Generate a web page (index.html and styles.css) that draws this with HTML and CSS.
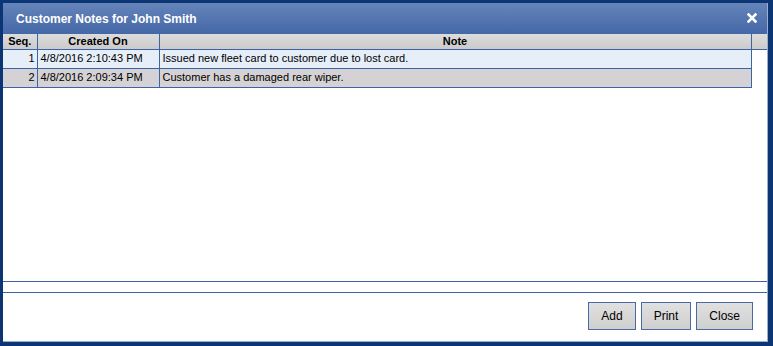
FILE: index.html
```html
<!DOCTYPE html>
<html>
<head>
<meta charset="utf-8">
<link rel="stylesheet" href="styles.css">
</head>
<body>
<div class="dialog">
  <div class="inner">
    <div class="titlebar">
      <span class="title">Customer Notes for John Smith</span>
      <svg class="close-x" width="10" height="10" viewBox="0 0 10 10"><path d="M1.5 1.5 L8.5 8.5 M8.5 1.5 L1.5 8.5" stroke="#fff" stroke-width="2.6" stroke-linecap="square"/></svg>
    </div>
    <div class="grid">
      <div class="ghead">
        <table class="tbl">
          <colgroup><col class="c1"><col class="c2"><col class="c3"></colgroup>
          <tr><th>Seq.</th><th>Created On</th><th>Note</th></tr>
        </table>
      </div>
      <table class="tbl body">
        <colgroup><col class="c1"><col class="c2"><col class="c3"></colgroup>
        <tr class="r1"><td class="num">1</td><td>4/8/2016 2:10:43 PM</td><td>Issued new fleet card to customer due to lost card.</td></tr>
        <tr class="r2"><td class="num">2</td><td>4/8/2016 2:09:34 PM</td><td>Customer has a damaged rear wiper.</td></tr>
      </table>
    </div>
    <div class="strip"></div>
    <div class="footer">
      <button class="btn">Add</button>
      <button class="btn">Print</button>
      <button class="btn">Close</button>
    </div>
  </div>
</div>
</body>
</html>
```
FILE: styles.css
```css
* { box-sizing: border-box; }
body { margin: 0; font-family: "Liberation Sans", Arial, sans-serif; }
.dialog {
  width: 773px; height: 346px;
  background: #0b3573;
  border-style: solid; border-color: #0b3573;
  border-width: 3px 5px 4px 3px;
}
.inner {
  height: 100%;
  background: #fff;
  border-right: 1px solid #9aaecd;
  border-bottom: 1px solid #9aaecd;
  display: flex; flex-direction: column;
}
.titlebar {
  height: 31px;
  background: linear-gradient(#6584ba, #4467a6);
  display: flex; align-items: center; justify-content: space-between;
  padding: 0 10px 0 13px;
}
.title { color: #fff; font-weight: bold; font-size: 12px; }
.close-x { display: block; margin-top: -1px; }
.grid { height: 248px; border-bottom: 1px solid #3d63a6; }
.ghead {
  background: linear-gradient(#dcdcdc, #cbcbcb);
  border-bottom: 1px solid #3d63a6;
  height: 16px;
}
.tbl { border-collapse: collapse; table-layout: fixed; width: 748px; font-size: 11px; color: #000; }
.c1 { width: 34px; } .c2 { width: 122px; } .c3 { width: 592px; }
.tbl th {
  height: 15px; padding: 0; font-weight: bold; text-align: center;
  border-right: 1px solid #3d63a6; line-height: 15px;
}
.tbl.body td {
  height: 19px; padding: 0 3px; border: 1px solid #3d63a6; line-height: 17px;
  white-space: nowrap; overflow: hidden;
}
.tbl.body td.num { text-align: right; padding-right: 2px; }
.tbl.body tr:first-child td { border-top: none; height: 18px; }
.tbl.body td:first-child { border-left: none; }
.r1 td { background: #e6eef8; }
.r2 td { background: #d4d2d4; }
.strip { height: 11px; border-bottom: 1px solid #3d63a6; }
.footer {
  flex: 1; display: flex; justify-content: flex-end; align-items: flex-start;
  gap: 5px; padding: 9px 14px 0 0;
}
.btn {
  height: 28px; padding: 0 12px; margin: 0;
  font-family: "Liberation Sans", Arial, sans-serif; font-size: 12px; color: #000;
  background: linear-gradient(#e0e0e0, #cfcfcf);
  border: 1px solid #4a6aa3; border-radius: 0;
}
```
